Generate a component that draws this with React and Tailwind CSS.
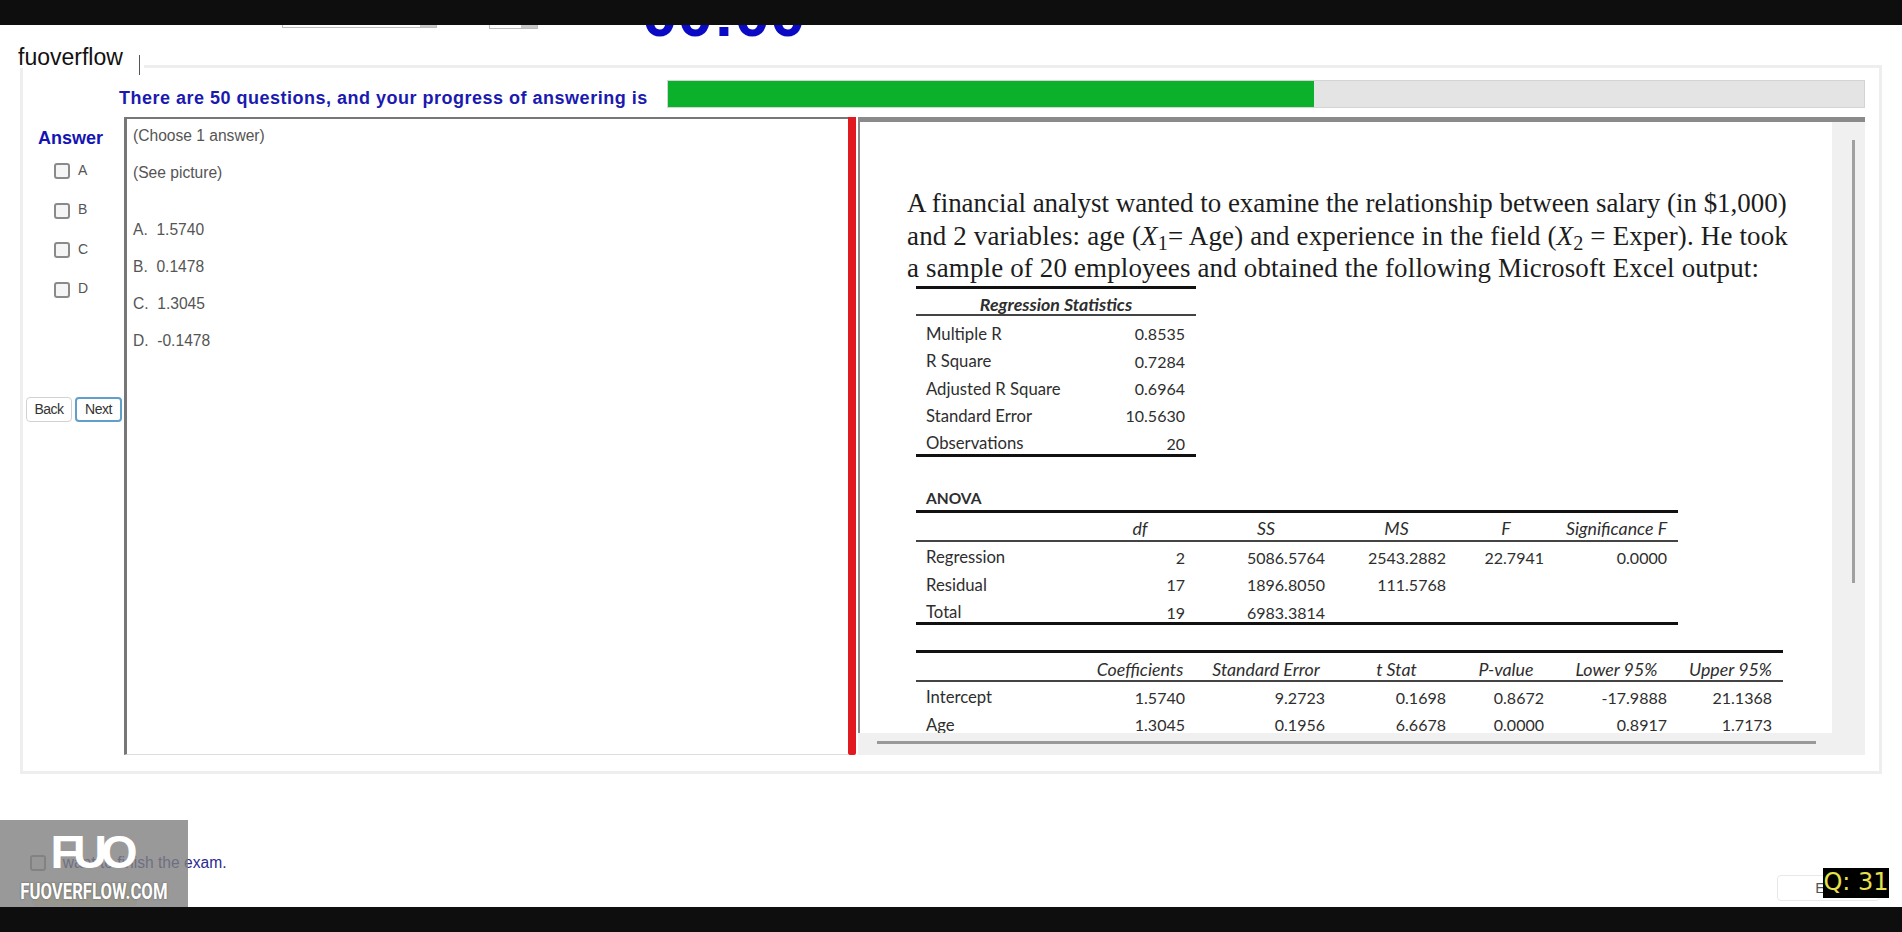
const sans = { fontFamily: '"Liberation Sans", Arial, sans-serif' };

const answers = ['A', 'B', 'C', 'D'];
const options = ['A.  1.5740', 'B.  0.1478', 'C.  1.3045', 'D.  -0.1478'];

const statRows = [
  ['Multiple R', '0.8535'],
  ['R Square', '0.7284'],
  ['Adjusted R Square', '0.6964'],
  ['Standard Error', '10.5630'],
  ['Observations', '20'],
];

const anovaHead = ['', 'df', 'SS', 'MS', 'F', 'Significance F'];
const anovaRows = [
  ['Regression', '2', '5086.5764', '2543.2882', '22.7941', '0.0000'],
  ['Residual', '17', '1896.8050', '111.5768', '', ''],
  ['Total', '19', '6983.3814', '', '', ''],
];

const coefHead = ['', 'Coefficients', 'Standard Error', 't Stat', 'P-value', 'Lower 95%', 'Upper 95%'];
const coefRows = [
  ['Intercept', '1.5740', '9.2723', '0.1698', '0.8672', '-17.9888', '21.1368'],
  ['Age', '1.3045', '0.1956', '6.6678', '0.0000', '0.8917', '1.7173'],
];

const Row = ({ cells, head, className = '' }) => (
  <div className={`grid grid-cols-[168px_112px_140px_121px_98px_123px_105px] items-center ${head ? 'h-[27px] italic text-[17.8px]' : 'h-[27.3px]'} ${className}`}>
    {cells.map((cell, i) => {
      if (i === 0) return <span key={i} className="pl-[10px] text-[16.7px]">{cell}</span>;
      return (
        <span key={i} className={head ? 'text-center whitespace-nowrap' : 'text-right pr-[11px] text-[16px]'}>
          {cell}
        </span>
      );
    })}
  </div>
);

const Checkbox = () => (
  <span className="block w-4 h-4 rounded-[3px] border-2 border-[#8a8a8a] bg-[#f5f5f5] shrink-0"></span>
);

const App = () => {
  return (
    <div className="w-[1902px] h-[932px] flex flex-col bg-white overflow-hidden relative" style={sans}>
      <div className="h-[25px] bg-[#0e0e0e] shrink-0"></div>

      {/* clipped exam toolbar */}
      <div className="h-[13px] shrink-0 overflow-hidden flex items-start relative">
        <div className="ml-[282px] w-[155px] h-[3px] bg-white border border-t-0 border-[#bdbdbd] flex justify-end">
          <span className="w-[16px] bg-[#c8c8c8]"></span>
        </div>
        <div className="ml-[52px] w-[49px] h-[4px] bg-white border border-t-0 border-[#bdbdbd] flex justify-end">
          <span className="w-[16px] bg-[#c8c8c8]"></span>
        </div>
        <span className="ml-[104px] -mt-[43px] text-[64px] leading-[64px] font-bold text-[#0a0ac4]">00:00</span>
      </div>

      {/* site name */}
      <div className="h-[30px] shrink-0 flex items-end pl-[18px] pr-[20px]">
        <span className="text-[23px] leading-[28px] text-[#111] bg-white -mb-[3px]">fuoverflow</span>
        <span className="ml-[16px] w-px h-[20px] -mb-[7px] bg-[#555]"></span>
        <span className="flex-1 ml-[4px] border-b-[3px] border-[#eeeeee]"></span>
      </div>

      {/* exam panel */}
      <div className="mx-[20px] h-[706px] shrink-0 border-[3px] border-t-0 border-[#eeeeee] flex flex-col pr-[14px]">
        <div className="h-[49px] shrink-0 flex items-start pt-[12px] pl-[96px]">
          <span className="w-[548px] pt-[5px] text-[18px] tracking-[0.5px] leading-[27px] font-bold text-[#1a1ab0] whitespace-nowrap">
            There are 50 questions, and your progress of answering is
          </span>
          <div className="flex-1 h-[28px] bg-[#e4e4e4] border border-[#d4d4d4]">
            <div className="h-full w-[54%] bg-[#0bb02b]"></div>
          </div>
        </div>

        <div className="h-[638px] shrink-0 flex">
          <div className="w-[101px] shrink-0 flex flex-col">
            <span className="mt-[11px] ml-[15px] text-[18px] leading-[20px] font-bold text-[#1414b4]">Answer</span>
            <div className="mt-[15px] ml-[31px] flex flex-col gap-[23.5px]">
              {answers.map((a) => (
                <div key={a} className="flex items-center gap-[8px] h-4 text-[14px] text-[#555]">
                  <Checkbox />
                  <span className="-mt-[2px]">{a}</span>
                </div>
              ))}
            </div>
            <div className="mt-[99px] ml-[3px] flex gap-[3px] text-[14px] tracking-[-0.5px] text-[#333]">
              <button className="w-[46px] h-[25px] bg-white rounded-[4px] border border-[#d2d2d2]">Back</button>
              <button className="w-[47px] h-[25px] bg-white rounded-[4px] border-2 border-[#5f9fc9]">Next</button>
            </div>
          </div>

          <div className="w-[724px] shrink-0 border-t-2 border-l-[3px] border-b border-t-[#777] border-l-[#777] border-b-[#ddd] pl-[6px] text-[15.6px] text-[#555] whitespace-pre">
            <div className="h-[35px] leading-[34px]">(Choose 1 answer)</div>
            <div className="h-[56.5px] leading-[37px]">(See picture)</div>
            {options.map((o) => (
              <div key={o} className="h-[37.2px] leading-[37px]">{o}</div>
            ))}
          </div>

          <div className="w-[8px] shrink-0 bg-[#e01a1f] rounded-b-[2px]"></div>

          <div className="flex-1 ml-[2px] flex flex-col min-w-0">
            <div className="flex-1 flex min-h-0 border-t-[5px] border-[#8a8a8a]">
              <div
                className="flex-1 min-w-0 overflow-hidden border-l-2 border-[#8a8a8a] pl-[47px] pt-[65px] text-[#1c1c1c]"
                style={{ fontFamily: '"Liberation Serif", "Times New Roman", serif' }}
              >
                <div className="text-[26.95px] leading-[32.6px] whitespace-nowrap">
                  <div>A financial analyst wanted to examine the relationship between salary (in $1,000)</div>
                  <div className="tracking-[0.17px]">and 2 variables: age (<i>X</i><sub>1</sub>= Age) and experience in the field (<i>X</i><sub>2</sub> = Exper). He took</div>
                  <div className="tracking-[0.16px]">a sample of 20 employees and obtained the following Microsoft Excel output:</div>
                </div>

                <div className="ml-[9px] mt-[1px] text-[15.5px] text-[#2e2e2e] w-[875px]" style={{ fontFamily: 'Lato, sans-serif' }}>
                  {/* regression statistics */}
                  <div className="w-[280px] border-t-[3px] border-b-[3px] border-[#111]">
                    <div className="h-[27px] pt-[3px] leading-[24px] text-[17.8px] text-center font-bold italic border-b-2 border-[#444]">
                      Regression Statistics
                    </div>
                    <div className="pt-[5px] -mb-[3px]">
                      {statRows.map((r) => (
                        <Row key={r[0]} cells={r} />
                      ))}
                    </div>
                  </div>

                  {/* anova */}
                  <div className="mt-[30px] pl-[10px] h-[23px] leading-[23px] font-bold">ANOVA</div>
                  <div className="w-[762px] border-t-[3px] border-b-[3px] border-[#111]">
                    <div className="border-b-2 border-[#444]">
                      <Row cells={anovaHead} head className="pt-[2px]" />
                    </div>
                    <div className="pt-[2px] -mb-[4px]">
                      {anovaRows.map((r) => (
                        <Row key={r[0]} cells={r} />
                      ))}
                    </div>
                  </div>

                  {/* coefficients */}
                  <div className="mt-[25px] w-[867px] border-t-[3px] border-[#111]">
                    <div className="border-b-2 border-[#444]">
                      <Row cells={coefHead} head className="pt-[3px]" />
                    </div>
                    <div className="pt-[2px]">
                      {coefRows.map((r) => (
                        <Row key={r[0]} cells={r} />
                      ))}
                    </div>
                  </div>
                </div>
              </div>
              <div className="w-[33px] shrink-0 bg-[#f0f0f0] pl-[20px] pt-[18px]">
                <div className="w-[3px] h-[443px] bg-[#a0a0a0]"></div>
              </div>
            </div>
            <div className="h-[22px] shrink-0 bg-[#f0f0f0] pl-[19px] pt-[8px]">
              <div className="w-[939px] h-[3px] bg-[#999]"></div>
            </div>
          </div>
        </div>
      </div>

      {/* footer */}
      <div className="flex-1 relative flex flex-col items-start">
        <div className="mt-[77px] ml-[30px] flex items-center gap-[8px] text-[15.6px] text-[#2a2a90]">
          <Checkbox />
          <span>I want to finish the exam.</span>
        </div>
        <div className="mt-[8px] ml-[32px] w-[105px] h-[24px] rounded-[4px] bg-[#f6f6c8] border border-[#e8e8e8]"></div>
        <button className="absolute left-[1777px] top-[101px] w-[103px] h-[26px] bg-white rounded-[4px] border border-[#e8e8e8] text-[15px] text-[#555]">
          End
        </button>

        {/* logo over the page */}
        <div className="absolute left-0 top-[46px] w-[188px] h-[87px] bg-[#808080]/80 flex flex-col items-center text-white">
          <span className="mt-[13px] h-[38px] text-[47px] leading-[38px] font-bold tracking-[-6px] pr-[6px]">FUO</span>
          <span className="mt-[9px] text-[22px] leading-[24px] font-bold whitespace-nowrap scale-x-[0.76]" style={{ fontFamily: 'Roboto, sans-serif', textShadow: '0 0 2px #555' }}>
            FUOVERFLOW.COM
          </span>
        </div>

        <span
          className="absolute left-[1823px] top-[94px] w-[66px] h-[30px] bg-black text-[#e6e04a] text-[24px] leading-[28px] whitespace-pre text-center"
          style={{ fontFamily: '"DejaVu Sans", sans-serif' }}
        >
          Q: 31
        </span>
      </div>

      <div className="h-[25px] bg-[#0e0e0e] shrink-0"></div>
    </div>
  );
};

export default App;
